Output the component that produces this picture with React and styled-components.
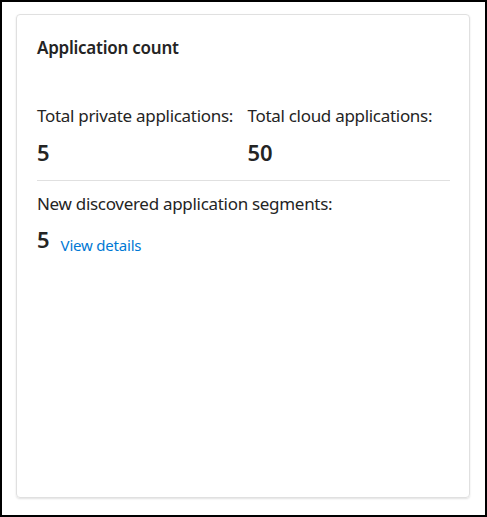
import React from "react";
import styled, { createGlobalStyle } from "styled-components";

const Global = createGlobalStyle`
  html, body { margin: 0; padding: 0; background: #ffffff; }
  * { box-sizing: border-box; }
  body { font-family: "Noto Sans", "Open Sans", sans-serif; color: #242424; }
`;

const Frame = styled.div`
  width: 487px;
  height: 517px;
  border: 2px solid #000000;
  padding: 12px 15px 17px 14px;
  display: flex;
  background: #ffffff;
`;

const Card = styled.section`
  flex: 1;
  border: 1px solid #e0e0e0;
  border-radius: 4px;
  box-shadow: 0 1px 2px rgba(0, 0, 0, 0.12);
  padding: 21px 19px 20px 20px;
  display: flex;
  flex-direction: column;
`;

const Title = styled.h2`
  margin: 0;
  font-size: 17px;
  line-height: 24px;
  font-weight: 600;
  letter-spacing: -0.25px;
  color: #242424;
`;

const Stats = styled.div`
  margin-top: 44px;
  display: grid;
  grid-template-columns: 1fr 1fr;
  column-gap: 8px;
  padding-bottom: 13px;
  border-bottom: 1px solid #e0e0e0;
`;

const Stat = styled.div`
  display: flex;
  flex-direction: column;
`;

const Label = styled.div`
  font-size: 17px;
  line-height: 24px;
  letter-spacing: -0.3px;
  color: #242424;
  white-space: nowrap;
`;

const Value = styled.div`
  margin-top: ${(p) => p.$gap ?? 9}px;
  font-size: 22px;
  line-height: 30px;
  font-weight: 600;
  color: #242424;
`;

const Section = styled.div`
  margin-top: 11px;
  display: flex;
  flex-direction: column;
`;

const ValueRow = styled.div`
  margin-top: 8px;
  display: flex;
  align-items: flex-end;
  gap: 11px;
`;

const Link = styled.a`
  font-size: 15px;
  line-height: 18px;
  letter-spacing: -0.2px;
  color: #0078d4;
  text-decoration: none;
  cursor: pointer;
`;

export default function App() {
  return (
    <>
      <Global />
      <Frame>
        <Card>
          <Title>Application count</Title>
          <Stats>
            <Stat>
              <Label>Total private applications:</Label>
              <Value>5</Value>
            </Stat>
            <Stat>
              <Label>Total cloud applications:</Label>
              <Value>50</Value>
            </Stat>
          </Stats>
          <Section>
            <Label>New discovered application segments:</Label>
            <ValueRow>
              <Value $gap={0}>5</Value>
              <Link>View details</Link>
            </ValueRow>
          </Section>
        </Card>
      </Frame>
    </>
  );
}
